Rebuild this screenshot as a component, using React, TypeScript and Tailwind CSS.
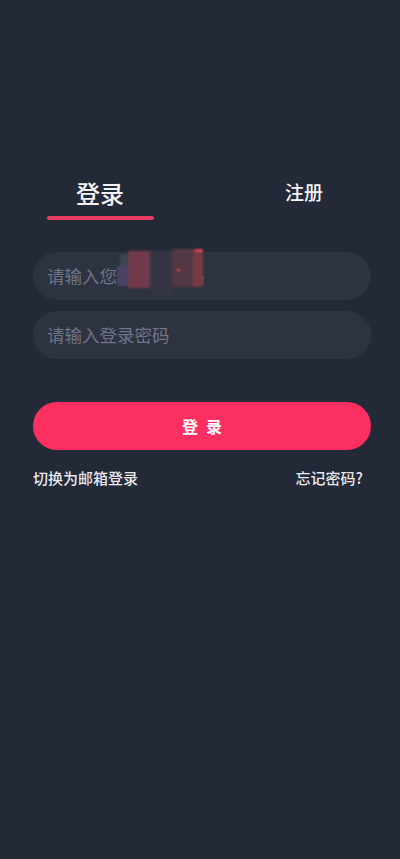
import React from "react";

export default function App() {
  return (
    <div
      className="min-h-[859px] w-full bg-[#242937] text-[#f2f2f4]"
      style={{ fontFamily: '"Noto Sans CJK SC", "Noto Sans", sans-serif' }}
    >
      <div className="grid grid-cols-2 pt-[181px]">
        <div className="flex flex-col items-center">
          <div className="text-[24px] leading-[24px] font-medium text-[#f4f4f6]">登录</div>
          <div className="mt-[11px] h-[4px] w-[107px] rounded-full bg-[#ea3d62]" />
        </div>
        <div className="flex justify-center pt-[1px] pl-[8px]">
          <div className="text-[19px] leading-[19px] font-medium text-[#f4f4f6]">注册</div>
        </div>
      </div>

      <div className="ml-[33px] mr-[29px] mt-[32px] flex flex-col gap-[11px]">
        <div className="relative flex h-[48px] items-center rounded-full bg-[#2e3341] pl-[14px]">
          <span className="text-[17.5px] leading-[18px] text-[#6f7486]">请输入您的手机号码</span>
          <div className="absolute left-[84px] top-[-3px] h-[52px] w-[88px] blur-[0.8px]">
            <div className="absolute left-[3px] top-[5px] h-[32px] w-[10px] bg-[#3a4650]" />
            <div className="absolute left-0 top-[17px] h-[20px] w-[12px] bg-[#4a4262]" />
            <div className="absolute left-[11px] top-[2px] h-[37px] w-[23px] bg-[#703a4b]" />
            <div className="absolute left-[33px] top-[2px] h-[47px] w-[23px] rounded-b-[6px] bg-[#363543]" />
            <div className="absolute left-[55px] top-0 h-[38px] w-[22px] bg-[#523844]" />
            <div className="absolute left-[60px] top-[20px] h-[2px] w-[3px] bg-[#ff4660]" />
            <div className="absolute left-[76px] top-0 h-[38px] w-[10px] rounded-r-[3px] bg-[#763a40]" />
            <div className="absolute left-[78px] top-0 h-[3px] w-[8px] rounded-full bg-[#e54556]" />
          </div>
        </div>
        <div className="flex h-[48px] items-center rounded-full bg-[#2e3341] pl-[14px]">
          <span className="text-[17.5px] leading-[18px] text-[#6f7486]">请输入登录密码</span>
        </div>
      </div>

      <div className="ml-[33px] mr-[29px] mt-[43px] flex h-[48px] items-center justify-center gap-[8px] rounded-full bg-[#fc3060]">
        <span className="text-[16px] leading-[16px] font-bold text-white">登</span>
        <span className="text-[16px] leading-[16px] font-bold text-white">录</span>
      </div>

      <div className="mt-[20px] flex items-center justify-between pl-[33px] pr-[37px]">
        <span className="text-[15px] leading-[15px] font-medium text-[#e8e8ec]">切换为邮箱登录</span>
        <span className="text-[15px] leading-[15px] font-medium text-[#e8e8ec]">忘记密码?</span>
      </div>
    </div>
  );
}
